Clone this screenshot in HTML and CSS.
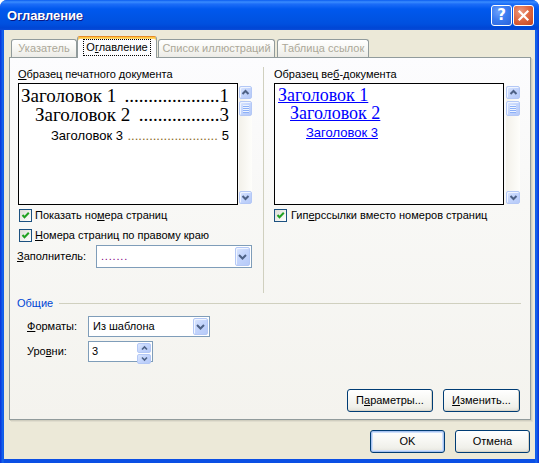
FILE: index.html
```html
<!DOCTYPE html>
<html lang="ru">
<head>
<meta charset="utf-8">
<title>Оглавление</title>
<link rel="stylesheet" href="styles.css">
</head>
<body>
<div class="window">
  <div class="titlebar">
    <span class="title">Оглавление</span>
    <div class="tb-btns">
      <span class="tb-btn help">?</span>
      <span class="tb-btn close"><svg width="13" height="13" viewBox="0 0 13 13"><path d="M2.5 2.5 L10.5 10.5 M10.5 2.5 L2.5 10.5" stroke="#fff" stroke-width="2.2" stroke-linecap="square" fill="none"/></svg></span>
    </div>
  </div>
  <div class="client">
    <div class="tabs">
      <div class="tab t1 disabled">Указатель</div>
      <div class="tab active"><span class="focus">О<u>г</u>лавление</span></div>
      <div class="tab t3 disabled">Список иллюстраций</div>
      <div class="tab t4 disabled">Таблица ссылок</div>
    </div>
    <div class="panel">
      <div class="cols">
        <div class="col col-left">
          <div class="label"><u>О</u>бразец печатного документа</div>
          <div class="preview-row">
            <div class="preview print">
              <div class="toc l1"><span class="t">Заголовок 1</span><span class="dn"><span class="dots">....................</span><span class="n">1</span></span></div>
              <div class="toc l2"><span class="t">Заголовок 2</span><span class="dn"><span class="dots">.................</span><span class="n">3</span></span></div>
              <div class="toc l3"><span class="t">Заголовок 3</span><span class="dn"><span class="dots">.........................</span><span class="n">5</span></span></div>
            </div>
            <div class="vscroll">
              <span class="sbtn"><svg width="13" height="13" viewBox="0 0 13 13"><path d="M3.5 8 L6.5 5 L9.5 8" stroke="#4D6185" stroke-width="2" fill="none"/></svg></span>
              <span class="thumb"><i></i><i></i><i></i><i></i></span>
              <span class="track"></span>
              <span class="sbtn"><svg width="13" height="13" viewBox="0 0 13 13"><path d="M3.5 5 L6.5 8 L9.5 5" stroke="#4D6185" stroke-width="2" fill="none"/></svg></span>
            </div>
          </div>
          <div class="check c1"><span class="cb"><svg width="11" height="11" viewBox="0 0 11 11"><path d="M2.5 5 L4.5 7.2 L8.8 2.8" stroke="#21A121" stroke-width="2" fill="none"/></svg></span><span>Показать но<u>м</u>ера страниц</span></div>
          <div class="check c2"><span class="cb"><svg width="11" height="11" viewBox="0 0 11 11"><path d="M2.5 5 L4.5 7.2 L8.8 2.8" stroke="#21A121" stroke-width="2" fill="none"/></svg></span><span><u>Н</u>омера страниц по правому краю</span></div>
          <div class="fill-row">
            <span class="fill-label"><u>З</u>аполнитель:</span>
            <div class="combo fill"><span class="cval leader">.......</span><span class="cbtn"><svg width="15" height="17" viewBox="0 0 15 17"><path d="M4 7 L7.5 10.5 L11 7" stroke="#4D6185" stroke-width="2" fill="none"/></svg></span></div>
          </div>
        </div>
        <div class="sep"></div>
        <div class="col col-right">
          <div class="label">Образец ве<u>б</u>-документа</div>
          <div class="preview-row">
            <div class="preview web">
              <div class="wl w1">Заголовок 1</div>
              <div class="wl w2">Заголовок 2</div>
              <div class="wl w3">Заголовок 3</div>
            </div>
            <div class="vscroll">
              <span class="sbtn"><svg width="13" height="13" viewBox="0 0 13 13"><path d="M3.5 8 L6.5 5 L9.5 8" stroke="#4D6185" stroke-width="2" fill="none"/></svg></span>
              <span class="thumb"><i></i><i></i><i></i><i></i></span>
              <span class="track"></span>
              <span class="sbtn"><svg width="13" height="13" viewBox="0 0 13 13"><path d="M3.5 5 L6.5 8 L9.5 5" stroke="#4D6185" stroke-width="2" fill="none"/></svg></span>
            </div>
          </div>
          <div class="check c1"><span class="cb"><svg width="11" height="11" viewBox="0 0 11 11"><path d="M2.5 5 L4.5 7.2 L8.8 2.8" stroke="#21A121" stroke-width="2" fill="none"/></svg></span><span>Гип<u>е</u>рссылки вместо номеров страниц</span></div>
        </div>
      </div>
      <div class="group-head"><span class="gtitle">Общие</span><span class="gline"></span></div>
      <div class="form-row r1">
        <span class="flabel"><u>Ф</u>орматы:</span>
        <div class="combo fmt"><span class="cval">Из шаблона</span><span class="cbtn"><svg width="15" height="17" viewBox="0 0 15 17"><path d="M4 7 L7.5 10.5 L11 7" stroke="#4D6185" stroke-width="2" fill="none"/></svg></span></div>
      </div>
      <div class="form-row r2">
        <span class="flabel">Уро<u>в</u>ни:</span>
        <div class="spin"><span class="cval">3</span><span class="spbtns"><span class="spb"><svg width="13" height="8" viewBox="0 0 13 8"><path d="M4 5.5 L6.5 3 L9 5.5" stroke="#4D6185" stroke-width="1.6" fill="none"/></svg></span><span class="spb"><svg width="13" height="8" viewBox="0 0 13 8"><path d="M4 2.5 L6.5 5 L9 2.5" stroke="#4D6185" stroke-width="1.6" fill="none"/></svg></span></span></div>
      </div>
      <div class="panel-btns">
        <span class="btn b-params">П<u>а</u>раметры...</span>
        <span class="btn b-edit"><u>И</u>зменить...</span>
      </div>
    </div>
    <div class="dlg-btns">
      <span class="btn b-ok">OK</span>
      <span class="btn b-cancel">Отмена</span>
    </div>
  </div>
</div>
</body>
</html>
```

FILE: styles.css
```css
* { box-sizing: border-box; }
html, body { margin: 0; padding: 0; }
body {
  width: 539px;
  height: 463px;
  overflow: hidden;
  background: #ffffff;
  font-family: "Liberation Sans", Arial, sans-serif;
  font-size: 11px;
  line-height: 13px;
  color: #000;
}
u { text-decoration: underline; text-underline-offset: 1px; }

.window {
  width: 539px;
  height: 463px;
  display: flex;
  flex-direction: column;
  background: linear-gradient(90deg, #0831D9 0, #166AEE 3px, #0B4FE4 4px, #0B4FE4 535px, #166AEE 536px, #0831D9 539px);
  border-radius: 7px 7px 0 0;
  overflow: hidden;
}

.titlebar {
  height: 30px;
  flex: none;
  display: flex;
  align-items: center;
  padding-left: 7px;
  background: linear-gradient(180deg, #0A5CF0 0, #3A8CFE 2px, #1C6DF8 4px, #0058EE 9px, #0055E6 16px, #0050DF 24px, #0046D5 28px, #0A4BD8 30px);
}
.title {
  color: #fff;
  font-weight: bold;
  font-size: 13px;
  letter-spacing: -0.1px;
  text-shadow: 1px 1px 0 #0A1883;
  margin-top: 1px;
}
.tb-btns {
  margin-left: auto;
  margin-right: 5px;
  display: flex;
  gap: 1px;
  margin-top: 1px;
}
.tb-btn {
  width: 21px;
  height: 21px;
  border: 1px solid #fff;
  border-radius: 3px;
  display: flex;
  align-items: center;
  justify-content: center;
  color: #fff;
  font-weight: bold;
  font-size: 16px;
  line-height: 1;
}
.help {
  background: radial-gradient(circle at 35% 30%, #6DA1FB 0, #3B7CF1 45%, #2A62DA 100%);
  font-family: "DejaVu Sans", sans-serif;
  font-size: 15px;
}
.close {
  background: radial-gradient(circle at 35% 30%, #EB9A80 0, #E06A44 45%, #C4431C 100%);
}

.client {
  flex: 1;
  margin: 0 4px 4px;
  background: #ECE9D8;
  display: flex;
  flex-direction: column;
}

/* tabs */
.tabs {
  height: 27px;
  flex: none;
  display: flex;
  align-items: flex-end;
  padding-left: 7px;
  position: relative;
  z-index: 2;
}
.tab {
  height: 18px;
  border: 1px solid #919B9C;
  border-bottom: none;
  border-radius: 3px 3px 0 0;
  background: linear-gradient(180deg, #FFFFFF 0, #F7F7F4 50%, #ECEBE6 100%);
  padding: 2px 0 0;
  text-align: center;
  white-space: nowrap;
}
.tab.disabled { color: #ACA899; }
.t1 { width: 66px; }
.t3 { width: 117px; margin-left: 1px; }
.t4 { width: 92px; margin-left: 2px; }
.tab.active {
  width: 80px;
  height: 22px;
  margin-bottom: -1px;
  background: #FCFCFE;
  border-top: 1px solid #E68B2C;
  box-shadow: inset 0 1px 0 #FFC73C, inset 0 2px 0 #FFD56F;
  padding: 4px 0 0;
}
.focus {
  display: inline-block;
  outline: 1px dotted #000;
  outline-offset: 1px;
  padding: 0 1px;
  line-height: 13px;
}

/* panel */
.panel {
  flex: none;
  margin-left: 5px;
  width: 522px;
  height: 363px;
  border: 1px solid #919B9C;
  background: linear-gradient(180deg, #FCFCFE 0, #F8F8F6 40%, #F4F3EE 100%);
  box-shadow: 1px 1px 0 #D0CEBF, 2px 2px 0 #E0DDCE;
  padding: 0 9px 0 8px;
  display: flex;
  flex-direction: column;
}
.cols {
  display: flex;
  margin-top: 5px;
  height: 230px;
  flex: none;
}
.col { display: flex; flex-direction: column; padding-top: 5px; }
.col-left { width: 235px; }
.col-right { width: 247px; }
.sep {
  width: 1px;
  margin: 4px 10px 0;
  background: #D0D0BF;
}
.label { height: 13px; margin-bottom: 2px; white-space: nowrap; }

.preview-row { display: flex; height: 122px; }
.preview {
  height: 122px;
  border: 1px solid #000;
  background: #fff;
  overflow: hidden;
}
.print { width: 220px; padding: 2px 8px 0 2px; font-family: "Liberation Serif", "Times New Roman", serif; }
.web { width: 230px; padding: 2px 4px 0 3px; }

.toc { display: flex; white-space: nowrap; }
.toc .t { flex: none; }
.toc .dn { margin-left: auto; display: flex; white-space: nowrap; }
.l1, .l2 { font-size: 19px; line-height: 19px; }
.l2 { padding-left: 14px; }
.l3 { font-family: "Liberation Sans", Arial, sans-serif; font-size: 13px; line-height: 16px; padding-left: 30px; margin-top: 4px; }
.l3 .dots { color: #8A6A1E; margin-right: 4px; }

.wl { color: #0000FF; text-decoration: underline; white-space: nowrap; }
.w1, .w2 { font-family: "Liberation Serif", "Times New Roman", serif; font-size: 18px; line-height: 18px; }
.w2 { padding-left: 12px; }
.w3 { font-size: 13px; line-height: 16px; padding-left: 28px; margin-top: 3px; }

.vscroll {
  width: 13px;
  margin-left: 1px;
  margin-top: 3px;
  height: 118px;
  display: flex;
  flex-direction: column;
  background: linear-gradient(90deg, #F3F1EA, #FEFEFB);
}
.col-right .vscroll { margin-left: 2px; width: 14px; }
.sbtn, .thumb {
  height: 13px;
  flex: none;
  border: 1px solid #B4C8F6;
  border-radius: 2px;
  background: linear-gradient(135deg, #DCE7FE 0, #C4D5FC 45%, #B6CAF8 100%);
  box-shadow: inset 1px 1px 0 #F0F5FF;
  display: flex;
  align-items: center;
  justify-content: center;
}
.sbtn svg { flex: none; }
.thumb {
  height: 15px;
  margin-top: 2px;
  flex-direction: column;
  gap: 1px;
}
.thumb i {
  display: block;
  width: 6px;
  height: 1px;
  background: #EEF4FE;
  box-shadow: 0 1px 0 #8CB0F8;
}
.track { flex: 1; }

.check { display: flex; align-items: center; height: 13px; white-space: nowrap; }
.check .cb {
  width: 13px;
  height: 13px;
  flex: none;
  border: 1px solid #1C5180;
  background: linear-gradient(135deg, #DCDCD7 0, #F2F2EE 60%, #FFFFFF 100%);
  margin-left: 1px;
  margin-right: 3px;
  display: flex;
  align-items: center;
  justify-content: center;
}
.c1 { margin-top: 4px; }
.c2 { margin-top: 7px; }
.col-right .check .cb { margin-left: 0; margin-right: 4px; }

.fill-row { display: flex; align-items: center; margin-top: 3px; height: 23px; }
.fill-label { width: 79px; margin-left: -1px; }

.combo, .spin {
  display: flex;
  align-items: stretch;
  border: 1px solid #7F9DB9;
  background: #fff;
  padding: 1px;
}
.fill { width: 156px; height: 23px; }
.cval { flex: 1; display: flex; align-items: center; padding-left: 2px; white-space: nowrap; }
.leader { color: #800080; letter-spacing: 0.8px; padding-left: 3px; }
.cbtn {
  width: 15px;
  flex: none;
  border: 1px solid #B4C8F6;
  border-radius: 2px;
  background: linear-gradient(135deg, #DCE7FE 0, #C4D5FC 45%, #B6CAF8 100%);
  box-shadow: inset 1px 1px 0 #F0F5FF;
  display: flex;
  align-items: center;
  justify-content: center;
}
.cbtn svg { flex: none; }

.group-head { display: flex; align-items: center; margin-top: 4px; height: 13px; margin-left: -1px; }
.gtitle { color: #0046D5; }
.gline { flex: 1; height: 1px; background: #D0D0BF; margin-left: 6px; }

.form-row { display: flex; align-items: center; height: 21px; padding-left: 9px; }
.r1 { margin-top: 6px; }
.r2 { margin-top: 4px; }
.flabel { width: 61px; }
.fmt { width: 122px; height: 21px; }
.fmt .cval { padding-left: 3px; }
.spin { width: 65px; height: 21px; }
.spin .cval { padding-left: 2px; }
.spbtns { width: 14px; display: flex; flex-direction: column; gap: 1px; }
.spb {
  flex: 1;
  border: 1px solid #B4C8F6;
  border-radius: 2px;
  background: linear-gradient(135deg, #DCE7FE 0, #C4D5FC 45%, #B6CAF8 100%);
  display: flex;
  align-items: center;
  justify-content: center;
}
.spb svg { flex: none; }

.btn {
  height: 23px;
  display: flex;
  align-items: center;
  justify-content: center;
  border: 1px solid #003C74;
  border-radius: 3px;
  background: linear-gradient(180deg, #FFFFFF 0, #F8F8F5 40%, #F0F0EA 80%, #E3E2DA 100%);
  box-shadow: inset -1px -1px 0 #D8D4C8;
  white-space: nowrap;
}
.panel-btns { display: flex; justify-content: flex-end; gap: 10px; margin-top: auto; margin-bottom: 7px; margin-right: 1px; }
.b-params { width: 86px; }
.b-edit { width: 77px; }

.dlg-btns { display: flex; justify-content: flex-end; gap: 10px; margin-top: 10px; margin-right: 5px; }
.b-ok, .b-cancel { width: 75px; }
.b-ok { box-shadow: inset 0 0 0 1px #A7C2F0, inset 0 0 0 2px #CFE0FB; }
```
